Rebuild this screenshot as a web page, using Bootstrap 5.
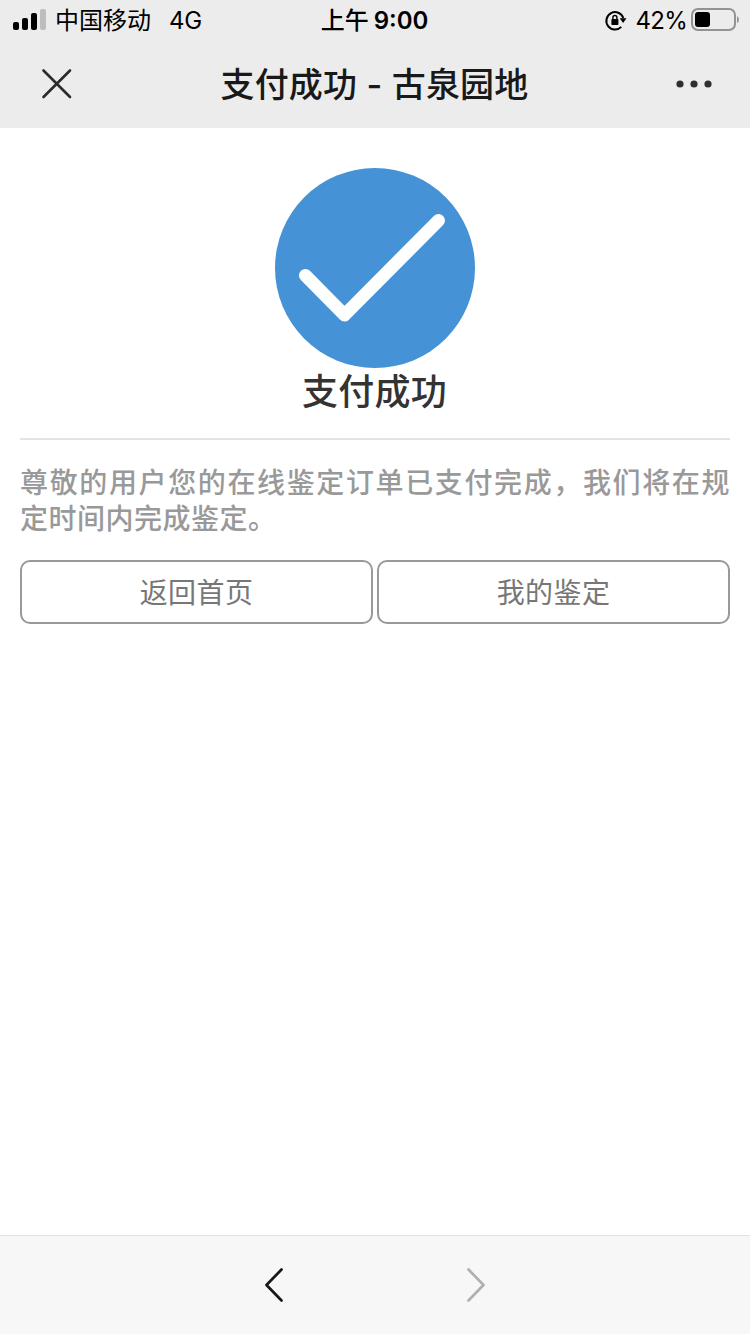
<!DOCTYPE html>
<html lang="zh-CN">
<head>
<meta charset="utf-8">
<meta name="viewport" content="width=device-width, initial-scale=1">
<title>支付成功 - 古泉园地</title>
<link href="https://cdn.jsdelivr.net/npm/bootstrap@5.3.0/dist/css/bootstrap.min.css" rel="stylesheet">
<style>
body { font-family: Inter, "Noto Sans CJK SC", sans-serif; color: #333; background: #fff; }
svg { display: block; flex: none; }
.top-area { background: #ececec; height: 128px; }
.status-bar { height: 40px; font-size: 24px; line-height: 40px; color: #000; }
.status-bar span { padding-top: 2px; }
.status-side { flex: 1 1 0; }
.status-time { font-weight: 500; padding: 1px 1px 0 0; }
.status-time b { font-weight: 600; margin-left: 5px; }
.network { margin-left: 18px; letter-spacing: -.2px; }
.battery-level { letter-spacing: -.7px; margin-right: -1px; }
.title-bar { height: 88px; }
.page-title { font-size: 34px; font-weight: 500; letter-spacing: .2px; line-height: 84px; padding: 2px 1px 0 0; color: #191919; }
.result-area { padding: 40px 20px 0; }
.result-title { font-size: 36px; font-weight: 500; letter-spacing: .3px; line-height: 44px; padding: 2px 1px 0 0; margin: 0; }
.rule-line { height: 2px; background: #e3e3e3; margin: 24px 0; }
.result-note { font-size: 28px; font-weight: 500; letter-spacing: .5px; line-height: 36px; color: #999; text-align: justify; margin: 0 0 23px; padding-top: 1px; }
.btn-plain { --bs-btn-padding-y: 0; --bs-btn-color: #777; --bs-btn-border-color: #999; --bs-btn-border-width: 2px; --bs-btn-border-radius: 10px; --bs-btn-font-size: 28px; height: 64px; line-height: 58px; padding-top: 2px; letter-spacing: .4px; }
.tool-bar { height: 99px; background: #f7f7f7; border-top: 1px solid #e1e1e1; gap: 178px; }
</style>
</head>
<body>
<div class="d-flex flex-column vh-100">
  <header class="top-area">
    <div class="status-bar d-flex text-nowrap">
      <div class="status-side d-flex align-items-center">
        <svg width="55" height="40" viewBox="0 0 55 40">
          <rect x="13" y="22" width="6" height="8" rx="2"/>
          <rect x="22" y="18" width="6" height="12" rx="2"/>
          <rect x="31" y="13" width="6" height="17" rx="2"/>
          <rect x="40" y="9" width="6" height="21" rx="2" fill="#bdbdbd"/>
        </svg>
        <span>中国移动</span><span class="network">4G</span>
      </div>
      <div class="status-time">上午<b>9:00</b></div>
      <div class="status-side d-flex align-items-center justify-content-end">
        <svg width="32" height="40" viewBox="0 0 32 40">
          <path d="M18.300 26.900A8.700 8.700 0 1 1 20.300 18" fill="none" stroke="#000" stroke-width="2"/>
          <path d="M16.700 18.300h6.800l-3.400 4.600z"/>
          <rect x="8.400" y="19" width="7" height="6" rx=".8"/>
          <path d="M9.900 19.500v-2a2 2 0 0 1 4 0v2" fill="none" stroke="#000" stroke-width="1.400"/>
        </svg>
        <span class="battery-level">42%</span>
        <svg width="64" height="40" viewBox="0 0 64 40">
          <rect x="6" y="9" width="43" height="21" rx="6" fill="none" stroke="#929292" stroke-width="2"/>
          <rect x="9" y="12" width="15" height="15" rx="3"/>
          <path d="M51 16q2 1 2 3.500t-2 3.500z" fill="#929292"/>
        </svg>
      </div>
    </div>
    <div class="title-bar d-flex align-items-center justify-content-between">
      <svg width="112" height="88" viewBox="0 0 112 88"><path d="M43.500 30.500 70 57M70 30.500 43.500 57" stroke="#2b2b2b" stroke-width="2.600" stroke-linecap="round"/></svg>
      <h1 class="page-title m-0">支付成功 - 古泉园地</h1>
      <svg width="112" height="88" viewBox="0 0 112 88" fill="#2f2f2f"><circle cx="42" cy="44" r="3.600"/><circle cx="56" cy="44" r="3.600"/><circle cx="70" cy="44" r="3.600"/></svg>
    </div>
  </header>
  <main class="result-area flex-grow-1">
    <div class="text-center">
      <svg class="mx-auto" width="200" height="200" viewBox="0 0 200 200"><circle cx="100" cy="100" r="100" fill="#4592d6"/><path d="M30.500 107.500 69.500 147 163.500 52.500" fill="none" stroke="#fff" stroke-width="13" stroke-linecap="round" stroke-linejoin="round"/></svg>
      <h2 class="result-title">支付成功</h2>
    </div>
    <div class="rule-line"></div>
    <p class="result-note">尊敬的用户您的在线鉴定订单已支付完成，我们将在规定时间内完成鉴定。</p>
    <div class="d-flex gap-1">
      <button type="button" class="btn btn-plain flex-fill w-50">返回首页</button>
      <button type="button" class="btn btn-plain flex-fill w-50">我的鉴定</button>
    </div>
  </main>
  <footer class="tool-bar d-flex justify-content-center align-items-center">
    <svg width="24" height="40" viewBox="0 0 24 40"><path d="M19.500 4.500 4.500 20 19.500 35.500" fill="none" stroke="#181818" stroke-width="2.700" stroke-linecap="round" stroke-linejoin="round"/></svg>
    <svg width="24" height="40" viewBox="0 0 24 40"><path d="M4.500 4.500 19.500 20 4.500 35.500" fill="none" stroke="#b0b0b0" stroke-width="2.700" stroke-linecap="round" stroke-linejoin="round"/></svg>
  </footer>
</div>
<script src="https://cdn.jsdelivr.net/npm/bootstrap@5.3.0/dist/js/bootstrap.bundle.min.js"></script>
</body>
</html>
